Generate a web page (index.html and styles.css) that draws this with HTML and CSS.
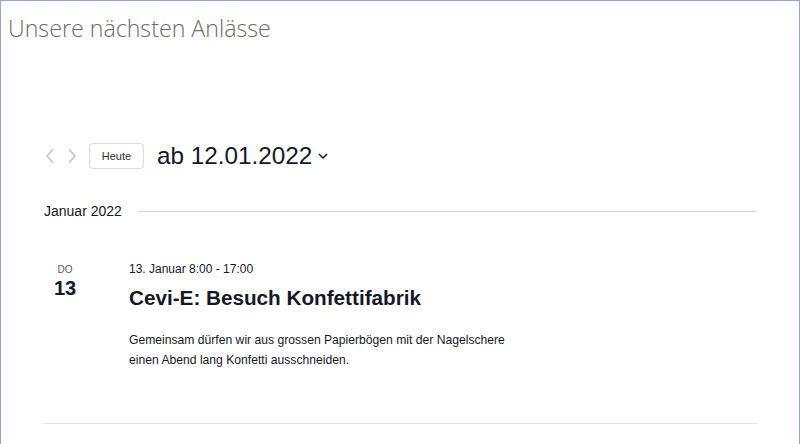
FILE: index.html
```html
<!DOCTYPE html>
<html lang="de">
<head>
<meta charset="utf-8">
<title>Unsere nächsten Anlässe</title>
<link rel="stylesheet" href="styles.css">
</head>
<body>
<div class="frame">
  <h1 class="page-title">Unsere nächsten Anlässe</h1>
  <div class="events">
    <div class="nav">
      <div class="arrows">
        <svg class="arrow" width="12" height="16" viewBox="0 0 12 16"><path d="M9 1.5 L3 8 L9 14.5" fill="none" stroke="currentColor" stroke-width="1.5"/></svg>
        <svg class="arrow" width="12" height="16" viewBox="0 0 12 16"><path d="M3 1.5 L9 8 L3 14.5" fill="none" stroke="currentColor" stroke-width="1.5"/></svg>
      </div>
      <button class="today">Heute</button>
      <div class="date-pick">ab 12.01.2022
        <svg class="caret" width="10" height="6" viewBox="0 0 10 6"><path d="M1 1 L5 5 L9 1" fill="none" stroke="currentColor" stroke-width="1.5"/></svg>
      </div>
    </div>
    <div class="month">
      <span class="month-label">Januar 2022</span>
      <span class="month-line"></span>
    </div>
    <div class="event">
      <div class="day">
        <span class="weekday">Do</span>
        <span class="daynum">13</span>
      </div>
      <div class="details">
        <div class="time">13. Januar 8:00 - 17:00</div>
        <h3 class="ev-title">Cevi-E: Besuch Konfettifabrik</h3>
        <p class="desc">Gemeinsam dürfen wir aus grossen Papierbögen mit der Nagelschere einen Abend lang Konfetti ausschneiden.</p>
      </div>
    </div>
    <div class="bottom-line"></div>
  </div>
</div>
</body>
</html>
```
FILE: styles.css
```css
html, body {
  margin: 0;
  padding: 0;
  background: #fff;
}
.frame {
  box-sizing: border-box;
  width: 800px;
  min-height: 470px;
  border: 1px solid #88a8df;
  border-bottom: none;
  padding: 0 7px;
}
.page-title {
  margin: 0;
  padding-top: 12px;
  font-family: "Open Sans", sans-serif;
  font-weight: 300;
  font-size: 23.2px;
  line-height: 30px;
  color: #6b6b6b;
}
.events {
  margin: 0 35px 0 36px;
  font-family: "Liberation Sans", Arial, sans-serif;
  color: #141827;
}
.nav {
  display: flex;
  align-items: center;
  margin-top: 100px;
  height: 26px;
}
.arrows {
  display: flex;
  gap: 10px;
  color: #c2c2c2;
}
.arrow { display: block; }
.today {
  margin-left: 11px;
  height: 26px;
  width: 55px;
  border: 1px solid #dcdcdc;
  border-radius: 4px;
  background: #fff;
  font-family: "Liberation Sans", Arial, sans-serif;
  font-size: 11px;
  color: #333;
  padding: 0;
}
.date-pick {
  margin-left: 13px;
  font-size: 24.3px;
  line-height: 28px;
  display: flex;
  align-items: center;
  gap: 6px;
}
.caret { color: #141827; }
.month {
  display: flex;
  align-items: center;
  margin-top: 32px;
  height: 20px;
}
.month-label {
  font-size: 14px;
}
.month-line {
  flex: 1;
  height: 1px;
  background: #d5d5d5;
  margin-left: 16px;
}
.event {
  display: flex;
  margin-top: 40px;
}
.day {
  width: 85px;
  display: flex;
  flex-direction: column;
  align-items: flex-start;
  padding-left: 9px;
  padding-top: 3px;
  box-sizing: border-box;
}
.weekday {
  text-transform: uppercase;
  font-size: 10px;
  line-height: 12px;
  color: #5d5d5d;
  width: 24px;
  text-align: center;
}
.daynum {
  font-weight: bold;
  font-size: 20px;
  line-height: 24px;
  width: 24px;
  text-align: center;
}
.details { width: 400px; }
.time {
  font-size: 12px;
  line-height: 16px;
}
.ev-title {
  margin: 8px 0 0;
  font-size: 20.7px;
  line-height: 26px;
  font-weight: bold;
}
.desc {
  margin: 19px 0 0;
  font-size: 12.15px;
  line-height: 20px;
}
.bottom-line {
  margin-top: 53px;
  height: 1px;
  background: #e4e4e4;
}
```
